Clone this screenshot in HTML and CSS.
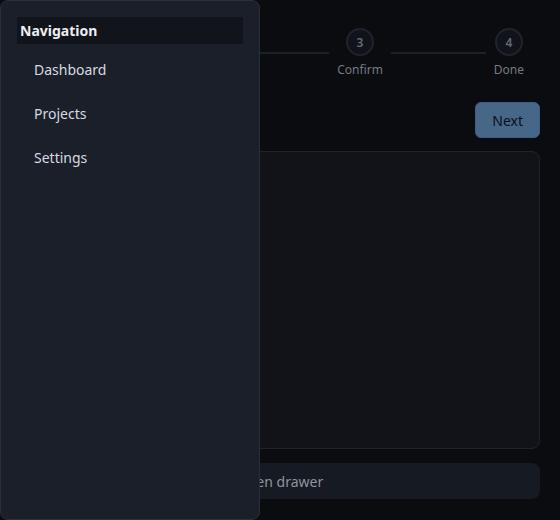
FILE: index.html
```html
<!DOCTYPE html>
<html lang="en">
<head>
<meta charset="utf-8">
<title>Wizard</title>
<link rel="stylesheet" href="styles.css">
</head>
<body>
<div class="page">
  <ol class="stepper">
    <li class="step"><span class="step-dot">1</span><span class="step-label">Account</span></li>
    <li class="step-line"></li>
    <li class="step"><span class="step-dot">2</span><span class="step-label">Shipping</span></li>
    <li class="step-line"></li>
    <li class="step"><span class="step-dot">3</span><span class="step-label">Confirm</span></li>
    <li class="step-line"></li>
    <li class="step"><span class="step-dot">4</span><span class="step-label">Done</span></li>
  </ol>
  <div class="actions">
    <button class="btn-next" type="button">Next</button>
  </div>
  <section class="card"></section>
  <button class="open-bar" type="button">Open drawer</button>
</div>

<div class="backdrop"></div>
<aside class="drawer">
  <h2 class="drawer-title">Navigation</h2>
  <ul class="nav-list">
    <li class="nav-item">Dashboard</li>
    <li class="nav-item">Projects</li>
    <li class="nav-item">Settings</li>
  </ul>
</aside>
</body>
</html>
```

FILE: styles.css
```css
* { box-sizing: border-box; }

html, body {
  margin: 0;
  height: 100%;
}

body {
  background: #0b0c10;
  font-family: "Noto Sans", "Open Sans", sans-serif;
  color: #d5d9e0;
  overflow: hidden;
}

.page {
  height: 520px;
  padding: 28px 20px 21px 20px;
  display: flex;
  flex-direction: column;
}

.stepper {
  list-style: none;
  margin: 0;
  padding: 0 16px 0 0;
  display: flex;
  align-items: center;
  height: 50px;
}

.step {
  display: flex;
  flex-direction: column;
  align-items: center;
  gap: 6px;
}

.step-dot {
  width: 28px;
  height: 28px;
  border-radius: 50%;
  border: 2px solid #1f232c;
  background: #101319;
  color: #666b75;
  font-size: 12px;
  font-weight: 600;
  display: flex;
  align-items: center;
  justify-content: center;
}

.step-label {
  font-size: 12px;
  line-height: 16px;
  color: #747984;
}

.step-line {
  flex: 1;
  height: 2px;
  background: #1c2029;
  margin: 0 8px;
}

.actions {
  margin-top: 24px;
  display: flex;
  justify-content: flex-end;
}

.btn-next {
  height: 36px;
  padding: 0 16px;
  border: 1px solid #3f5d80;
  border-radius: 6px;
  background: #476789;
  color: #0a0f16;
  font-family: inherit;
  font-size: 14px;
}

.card {
  margin-top: 13px;
  flex: 1;
  background: #111318;
  border: 1px solid #20232b;
  border-radius: 8px;
}

.open-bar {
  margin-top: 14px;
  height: 36px;
  border: 0;
  border-radius: 8px;
  background: #161a22;
  color: #8f949d;
  font-family: inherit;
  font-size: 14px;
  text-align: center;
}

.backdrop {
  position: fixed;
  inset: 0;
  background: rgba(0, 0, 0, 0);
}

.drawer {
  position: fixed;
  left: 0;
  top: 0;
  width: 260px;
  height: 520px;
  background: #1b1f29;
  border: 1px solid #2a2f3a;
  border-radius: 8px;
  padding: 16px;
}

.drawer-title {
  margin: 0;
  height: 27px;
  line-height: 27px;
  padding: 0 3px;
  background: #11141b;
  color: #eceef2;
  font-size: 14px;
  font-weight: 700;
}

.nav-list {
  list-style: none;
  margin: 8px 0 0 0;
  padding: 0;
  display: flex;
  flex-direction: column;
  gap: 8px;
}

.nav-item {
  height: 36px;
  line-height: 36px;
  padding-left: 17px;
  font-size: 14px;
  color: #d6dae1;
}
```
